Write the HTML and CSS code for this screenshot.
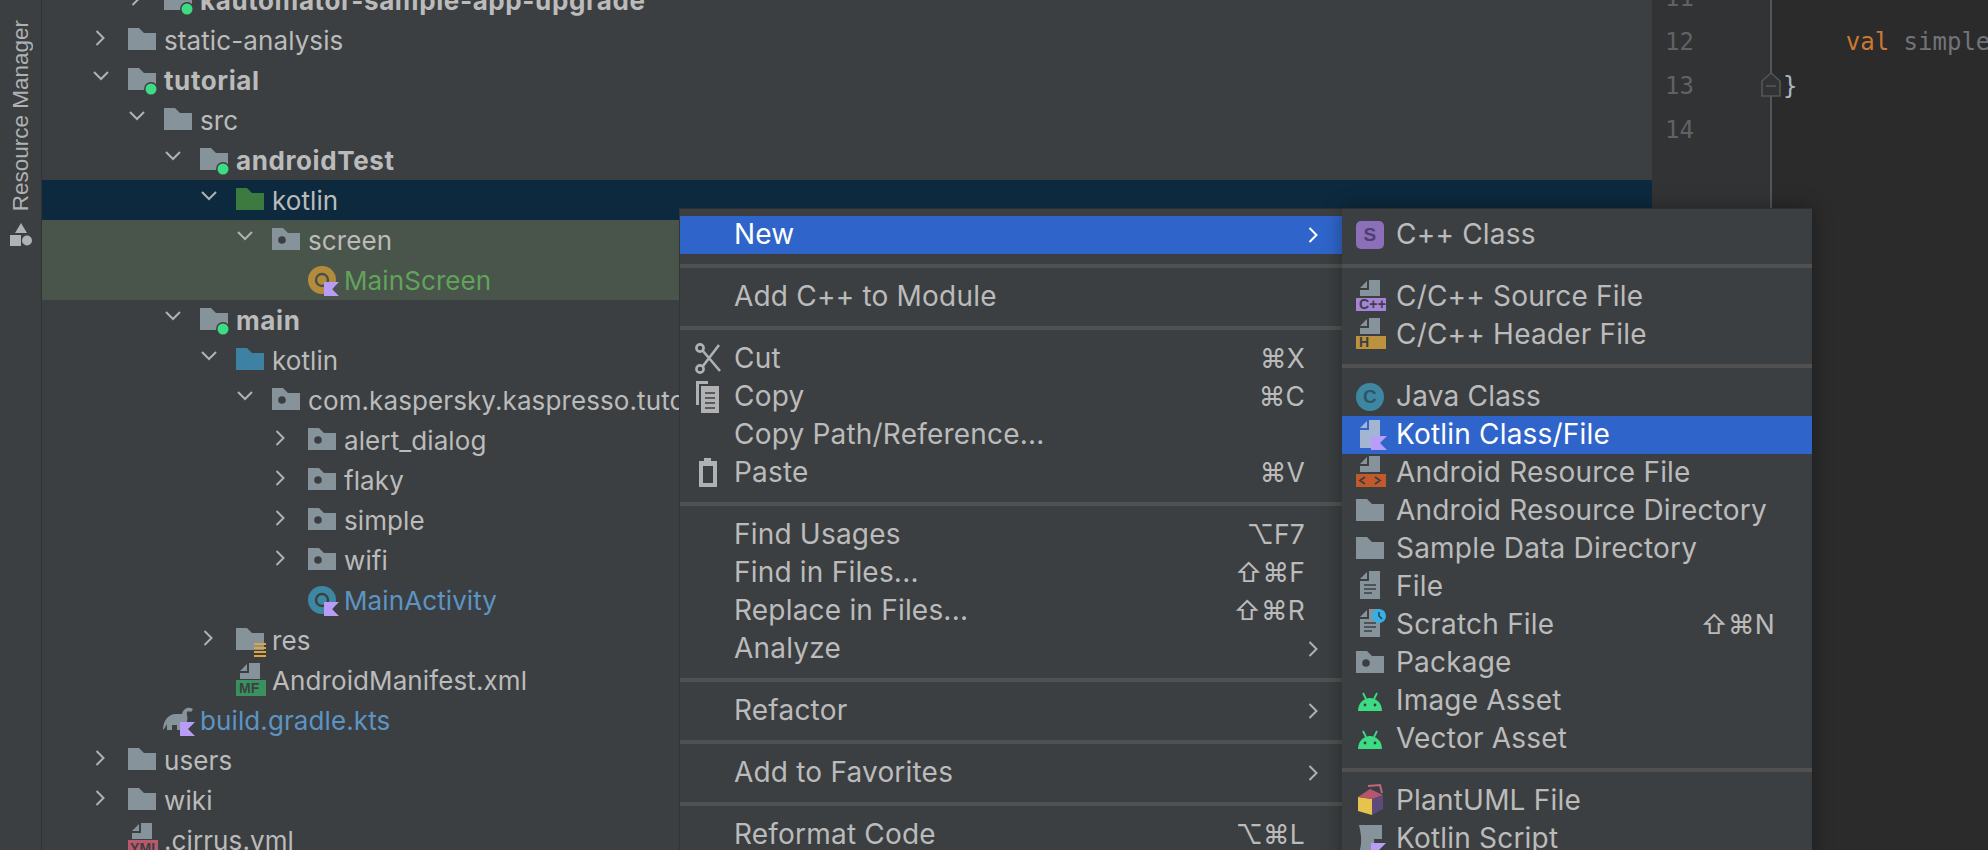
FILE: index.html
```html
<!DOCTYPE html>
<html lang="en">
<head>
    <meta charset="UTF-8">
    <title>Project</title>
    <link rel="stylesheet" href="styles.css">
</head>
<body>
<svg class="defs" width="0" height="0" aria-hidden="true">
    <defs>
        <path id="i-right" d="M1.5 1L8.5 8L1.5 15" fill="none" stroke="currentColor" stroke-width="2"/>
        <path id="i-down" d="M1 1L8 8L15 1" fill="none" stroke="currentColor" stroke-width="2"/>
        <path id="i-folder-shape" d="M0 4H11L16 9H28V26H0Z"/>
        <polygon id="i-k" points="16,18 31,18 24,25 31,32 16,32" fill="#b99bf8"/>
        <g id="i-folder"><use href="#i-folder-shape" fill="#87939a"/></g>
        <g id="i-module">
            <use href="#i-folder-shape" fill="#87939a"/>
            <circle cx="23" cy="25" r="7" fill="#3c3f41"/>
            <circle cx="23" cy="25" r="5.5" fill="#3ddc84"/>
        </g>
        <g id="i-package">
            <use href="#i-folder-shape" fill="#87939a"/>
            <circle cx="10" cy="16" r="3.8" fill="#3c3f41"/>
        </g>
        <g id="i-page">
            <polygon points="13,-1 24,-1 24,15 4,15 4,9 13,9" fill="#87939a"/>
            <polygon points="4,7 11,0 11,7" fill="#87939a"/>
        </g>
        <g id="i-doc">
            <polygon points="13,0 24,0 24,28 4,28 4,10 13,10" fill="#87939a"/>
            <polygon points="4,8 11,1 11,8" fill="#87939a"/>
            <path d="M8 14H20M8 18H20M8 22H16" stroke="#3c3f41" stroke-width="1.6"/>
        </g>
        <g id="i-android">
            <path d="M2 26C2 18 8 13 14 13S26 18 26 26Z" fill="#3ddc84"/>
            <path d="M7 8L10 14M21 8L18 14" stroke="#3ddc84" stroke-width="1.8"/>
            <circle cx="9" cy="20" r="1.4" fill="#3c3f41"/>
            <circle cx="19" cy="20" r="1.4" fill="#3c3f41"/>
        </g>
    </defs>
</svg>

<div class="ide">
    <aside class="sidebar">
        <span class="sidebar-label">Resource Manager</span>
        <svg class="sidebar-icon" width="22" height="24" viewBox="0 0 22 24">
            <polygon points="11,0 17,10 5,10" fill="#afb1b3"/>
            <rect x="0" y="12" width="11" height="11" fill="#afb1b3"/>
            <circle cx="17" cy="17.5" r="5" fill="#afb1b3"/>
        </svg>
    </aside>

    <main class="tree">
        <div class="row lvl-1 bold"><svg class="chev"><use href="#i-right"/></svg><svg class="ico"><use href="#i-module"/></svg><span>kautomator-sample-app-upgrade</span></div>
        <div class="row lvl-0"><svg class="chev"><use href="#i-right"/></svg><svg class="ico"><use href="#i-folder"/></svg><span>static-analysis</span></div>
        <div class="row lvl-0 bold"><svg class="chev open"><use href="#i-down"/></svg><svg class="ico"><use href="#i-module"/></svg><span>tutorial</span></div>
        <div class="row lvl-1"><svg class="chev open"><use href="#i-down"/></svg><svg class="ico"><use href="#i-folder"/></svg><span>src</span></div>
        <div class="row lvl-2 bold"><svg class="chev open"><use href="#i-down"/></svg><svg class="ico"><use href="#i-module"/></svg><span>androidTest</span></div>
        <div class="row lvl-3 selected"><svg class="chev open"><use href="#i-down"/></svg><svg class="ico"><use href="#i-folder-shape" fill="#3c7a3f"/></svg><span>kotlin</span></div>
        <div class="row lvl-4 tested"><svg class="chev open"><use href="#i-down"/></svg><svg class="ico"><use href="#i-package"/></svg><span>screen</span></div>
        <div class="row lvl-5 tested green"><span class="chev"></span><svg class="ico"><circle cx="14" cy="16" r="14" fill="#b38b3c"/><circle cx="14" cy="16" r="6" fill="none" stroke="#4b4f46" stroke-width="2.4"/><use href="#i-k"/></svg><span>MainScreen</span></div>
        <div class="row lvl-2 bold"><svg class="chev open"><use href="#i-down"/></svg><svg class="ico"><use href="#i-module"/></svg><span>main</span></div>
        <div class="row lvl-3"><svg class="chev open"><use href="#i-down"/></svg><svg class="ico"><use href="#i-folder-shape" fill="#3d82a3"/></svg><span>kotlin</span></div>
        <div class="row lvl-4"><svg class="chev open"><use href="#i-down"/></svg><svg class="ico"><use href="#i-package"/></svg><span>com.kaspersky.kaspresso.tutorial</span></div>
        <div class="row lvl-5"><svg class="chev"><use href="#i-right"/></svg><svg class="ico"><use href="#i-package"/></svg><span>alert_dialog</span></div>
        <div class="row lvl-5"><svg class="chev"><use href="#i-right"/></svg><svg class="ico"><use href="#i-package"/></svg><span>flaky</span></div>
        <div class="row lvl-5"><svg class="chev"><use href="#i-right"/></svg><svg class="ico"><use href="#i-package"/></svg><span>simple</span></div>
        <div class="row lvl-5"><svg class="chev"><use href="#i-right"/></svg><svg class="ico"><use href="#i-package"/></svg><span>wifi</span></div>
        <div class="row lvl-5 blue"><span class="chev"></span><svg class="ico"><circle cx="14" cy="16" r="14" fill="#3d87a3"/><circle cx="14" cy="16" r="6" fill="none" stroke="#3c3f41" stroke-width="2.4"/><use href="#i-k"/></svg><span>MainActivity</span></div>
        <div class="row lvl-3"><svg class="chev"><use href="#i-right"/></svg><svg class="ico"><use href="#i-folder"/><path d="M18 20H30M18 24H30M18 28H30M18 32H30" stroke="#e0a33e" stroke-width="2"/></svg><span>res</span></div>
        <div class="row lvl-3"><span class="chev"></span><svg class="ico"><use href="#i-page"/><rect y="16" width="30" height="16" fill="#3a9160"/><text class="tag" x="3" y="29">MF</text></svg><span>AndroidManifest.xml</span></div>
        <div class="row lvl-1 blue"><span class="chev"></span><svg class="ico"><path d="M-1 26C-1 16 5 10 12 10H18C19 5 24 2 29 5L27 8C24 6 22 8 23 11C24 14 23 18 22 20H18V26H13V21H8V26H3V20C2 22 1 24 -1 26Z" fill="#87939a"/><use href="#i-k"/></svg><span>build.gradle.kts</span></div>
        <div class="row lvl-0"><svg class="chev"><use href="#i-right"/></svg><svg class="ico"><use href="#i-folder"/></svg><span>users</span></div>
        <div class="row lvl-0"><svg class="chev"><use href="#i-right"/></svg><svg class="ico"><use href="#i-folder"/></svg><span>wiki</span></div>
        <div class="row lvl-0"><span class="chev"></span><svg class="ico"><use href="#i-page"/><rect y="16" width="30" height="16" fill="#b9596e"/><text class="tag" x="2" y="29">YML</text></svg><span>.cirrus.yml</span></div>
    </main>

    <div class="gutter">
        <div class="num">11</div>
        <div class="num">12</div>
        <div class="num">13</div>
        <div class="num">14</div>
        <svg class="fold" width="20" height="25" viewBox="0 0 20 25">
            <path d="M1 24V9L10 1L19 9V24Z" fill="#313335" stroke="#555" stroke-width="1.6"/>
            <path d="M5 14H15" stroke="#555" stroke-width="1.6"/>
        </svg>
    </div>

    <section class="editor">
        <div class="code">&nbsp;</div>
        <div class="code">    <span class="kw">val</span> <span class="unused">simpleActivity</span></div>
        <div class="code"><span class="brace">}</span></div>
        <div class="code">&nbsp;</div>
    </section>
</div>

<div class="popup">
    <div class="menu main-menu">
        <div class="item active"><span class="slot"></span><span>New</span><svg class="arrow"><use href="#i-right"/></svg></div>
        <div class="sep"></div>
        <div class="item"><span class="slot"></span><span>Add C++ to Module</span></div>
        <div class="sep"></div>
        <div class="item"><span class="slot"><svg class="ico"><g fill="none" stroke="#afb1b3" stroke-width="2.6"><circle cx="6" cy="26" r="3.6"/><circle cx="6" cy="5" r="3.6"/><path d="M9 8L26 28M9 23L25 2"/></g></svg></span><span>Cut</span><span class="keys">⌘X</span></div>
        <div class="item"><span class="slot"><svg class="ico"><path d="M2 0H14V3H5V24H2Z" fill="#afb1b3"/><path d="M7 5H25V32H7Z" fill="#afb1b3"/><path d="M11 12H21M11 17H21M11 22H21M11 27H21" stroke="#3c3f41" stroke-width="1.6"/></svg></span><span>Copy</span><span class="keys">⌘C</span></div>
        <div class="item"><span class="slot"></span><span>Copy Path/Reference...</span></div>
        <div class="item"><span class="slot"><svg class="ico"><path d="M5 4H10V1H17V4H23V30H5ZM9 9V26H19V9Z" fill="#afb1b3"/></svg></span><span>Paste</span><span class="keys">⌘V</span></div>
        <div class="sep"></div>
        <div class="item"><span class="slot"></span><span>Find Usages</span><span class="keys">⌥F7</span></div>
        <div class="item"><span class="slot"></span><span>Find in Files...</span><span class="keys">⇧⌘F</span></div>
        <div class="item"><span class="slot"></span><span>Replace in Files...</span><span class="keys">⇧⌘R</span></div>
        <div class="item"><span class="slot"></span><span>Analyze</span><svg class="arrow"><use href="#i-right"/></svg></div>
        <div class="sep"></div>
        <div class="item"><span class="slot"></span><span>Refactor</span><svg class="arrow"><use href="#i-right"/></svg></div>
        <div class="sep"></div>
        <div class="item"><span class="slot"></span><span>Add to Favorites</span><svg class="arrow"><use href="#i-right"/></svg></div>
        <div class="sep"></div>
        <div class="item"><span class="slot"></span><span>Reformat Code</span><span class="keys">⌥⌘L</span></div>
    </div>

    <div class="menu sub-menu">
        <div class="item"><span class="slot"><svg class="ico"><rect x="0" y="2" width="28" height="28" rx="5" fill="#8b6fb8"/><text class="badge" x="14" y="22" fill="#4f3f6f">S</text></svg></span><span>C++ Class</span></div>
        <div class="sep"></div>
        <div class="item"><span class="slot"><svg class="ico"><use href="#i-page"/><rect y="17" width="30" height="13" fill="#a583d6"/><text class="tag" x="3" y="28">C++</text></svg></span><span>C/C++ Source File</span></div>
        <div class="item"><span class="slot"><svg class="ico"><use href="#i-page"/><rect y="17" width="30" height="13" fill="#bd923f"/><text class="tag" x="3" y="28">H</text></svg></span><span>C/C++ Header File</span></div>
        <div class="sep"></div>
        <div class="item"><span class="slot"><svg class="ico"><circle cx="14" cy="16" r="14" fill="#3e87a2"/><text class="badge" x="14" y="22" fill="#2f5565">C</text></svg></span><span>Java Class</span></div>
        <div class="item active"><span class="slot"><svg class="ico"><polygon points="13,1 24,1 24,29 4,29 4,11 13,11" fill="#a3b5d0"/><polygon points="4,9 11,2 11,9" fill="#a3b5d0"/><polygon points="15,17 31,17 24,24 31,31 15,31" fill="#b99bf8"/></svg></span><span>Kotlin Class/File</span></div>
        <div class="item"><span class="slot"><svg class="ico"><use href="#i-page"/><rect y="17" width="30" height="13" fill="#c1592b"/><path d="M9 20L4 23.5L9 27M19 20L24 23.5L19 27" fill="none" stroke="#3c3f41" stroke-width="1.8"/></svg></span><span>Android Resource File</span></div>
        <div class="item"><span class="slot"><svg class="ico"><use href="#i-folder"/></svg></span><span>Android Resource Directory</span></div>
        <div class="item"><span class="slot"><svg class="ico"><use href="#i-folder"/></svg></span><span>Sample Data Directory</span></div>
        <div class="item"><span class="slot"><svg class="ico"><use href="#i-doc"/></svg></span><span>File</span></div>
        <div class="item"><span class="slot"><svg class="ico"><use href="#i-doc"/><circle cx="23" cy="7" r="7" fill="#35b0e6"/><path d="M23 3V7L26 10" fill="none" stroke="#2b3d4a" stroke-width="1.5"/></svg></span><span>Scratch File</span><span class="keys">⇧⌘N</span></div>
        <div class="item"><span class="slot"><svg class="ico"><use href="#i-package"/></svg></span><span>Package</span></div>
        <div class="item"><span class="slot"><svg class="ico"><use href="#i-android"/></svg></span><span>Image Asset</span></div>
        <div class="item"><span class="slot"><svg class="ico"><use href="#i-android"/></svg></span><span>Vector Asset</span></div>
        <div class="sep"></div>
        <div class="item"><span class="slot"><svg class="ico"><polygon points="2,12 16,14 16,30 2,26" fill="#e6c34d"/><polygon points="16,14 27,10 27,24 16,30" fill="#5b4a7a"/><polygon points="2,12 14,4 27,10 16,14" fill="#b4566e"/><path d="M12 1L24 0L26 8" fill="none" stroke="#c2667d" stroke-width="2"/></svg></span><span>PlantUML File</span></div>
        <div class="item"><span class="slot"><svg class="ico"><path d="M3 2H26V16H18C19 22 17 28 14 34H1C5 26 7 18 3 2Z" fill="#87939a"/><polygon points="15,20 30,20 23,27 30,34 15,34" fill="#b99bf8"/></svg></span><span>Kotlin Script</span></div>
    </div>
</div>
</body>
</html>
```

FILE: styles.css
```css
/* reset */
html,body{margin:0;padding:0;width:100%;height:100%;overflow:hidden}
body{background:#3c3f41;color:#bbbbbb;font-family:Inter,'Liberation Sans',sans-serif;font-size:26px}
svg{display:block;overflow:visible}
.defs{position:absolute}

.ide{
    display:flex;
    height:850px;
    overflow:hidden;
}

/* left tool strip */
.sidebar{
    flex:0 0 42px;
    box-sizing:border-box;
    display:flex;
    flex-direction:column;
    align-items:center;
    padding-top:20px;
    border-right:1px solid #323232;
    color:#afb1b3;
}
.sidebar-label{
    writing-mode:vertical-rl;
    transform:rotate(180deg);
    font-family:'Liberation Sans',sans-serif;
    font-size:22.5px;
    line-height:24px;
    white-space:nowrap;
}
.sidebar-icon{
    margin-top:12px;
}

/* project tree */
.tree{
    flex:1;
    margin-top:-20px;
    min-width:0;
    letter-spacing:.1px;
}
.row{
    display:flex;
    align-items:center;
    height:40px;
    white-space:nowrap;
}
.row.bold{font-weight:700;letter-spacing:.6px}
.row.selected{background:#0d293e}
.row.tested{background:#49544a}
.row.green{color:#62a35c}
.row.blue{color:#5c94c4}
.lvl-0{padding-left:50px}
.lvl-1{padding-left:86px}
.lvl-2{padding-left:122px}
.lvl-3{padding-left:158px}
.lvl-4{padding-left:194px}
.lvl-5{padding-left:230px}
.chev{
    flex:0 0 36px;
    width:36px;
    height:16px;
    color:#afb1b3;
    transform:translate(3px,-2px);
}
.chev.open{
    transform:translate(1px,-1px);
}
.ico{
    flex:0 0 32px;
    width:32px;
    height:32px;
    margin-right:4px;
}
.tag{
    font-family:'Liberation Sans',sans-serif;
    font-size:14px;
    font-weight:700;
    fill:#3c3f41;
}
.badge{
    font-family:'Liberation Sans',sans-serif;
    font-size:19px;
    font-weight:700;
    text-anchor:middle;
}

/* editor */
.gutter{
    position:relative;
    flex:0 0 120px;
    margin-top:-24px;
    padding-left:13px;
    box-sizing:border-box;
    background:#313335;
    height:874px;
    border-right:2px solid #555555;
}
.num,.code{
    height:44px;
    line-height:44px;
    font-family:'DejaVu Sans Mono',monospace;
    font-size:24px;
}
.num{color:#606366}
.fold{
    position:absolute;
    top:96px;
    right:-11px;
}
.editor{
    flex:0 0 216px;
    margin-top:-24px;
    height:874px;
    padding-left:16px;
    box-sizing:border-box;
    background:#2b2b2b;
    overflow:hidden;
}
.code{white-space:pre}
.kw{color:#cc7832}
.unused{color:#72737a}
.brace{color:#a9b7c6;margin-left:-5px}

/* context menu */
.popup{
    position:absolute;
    left:680px;
    top:208px;
    display:flex;
    align-items:flex-start;
    font-size:28px;
    letter-spacing:.2px;
}
.menu{
    padding-top:7px;
    background:#3c3f41;
    border-top:1px solid #2d2f30;
    box-sizing:border-box;
    height:660px;
}
.main-menu{
    width:662px;
    box-shadow:-1px 0 0 #323436;
}
.sub-menu{
    width:470px;
    box-shadow:0 0 18px rgba(0,0,0,.35);
}
.item{
    display:flex;
    align-items:center;
    height:38px;
    padding:0 37px 0 14px;
    white-space:nowrap;
}
.item span:not(.slot){
    position:relative;
    top:-1px;
}
.item.active{
    background:#2f65ca;
    color:#ffffff;
}
.slot{
    flex:0 0 40px;
}
.keys{
    margin-left:auto;
    font-size:26.5px;
}
.arrow{
    width:10px;
    height:16px;
    margin-left:auto;
    margin-right:-13px;
    color:#afb1b3;
}
.active .arrow{color:#ffffff}
.sep{
    height:4px;
    margin:10px 0;
    background:#515151;
}
```
